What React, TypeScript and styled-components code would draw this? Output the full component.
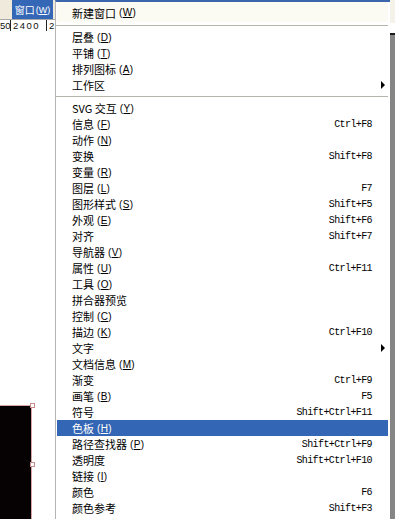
import React from 'react';
import styled, { createGlobalStyle } from 'styled-components';

const GlobalStyle = createGlobalStyle`
  html, body {
    margin: 0;
    padding: 0;
    background: #fff;
  }
  body {
    width: 395px;
    height: 519px;
    overflow: hidden;
    font-family: "Noto Sans CJK SC", "Liberation Sans", sans-serif;
  }
`;

const Screen = styled.div`
  display: flex;
  width: 395px;
  height: 519px;
  overflow: hidden;
  background: #fff;
`;

// left side: what is visible of the application behind the menu
const Workspace = styled.div`
  width: 55px;
  flex: none;
  display: flex;
  flex-direction: column;
`;

const MenuBar = styled.div`
  height: 19px;
  display: flex;
  background: #efeadb;
  border-bottom: 1px solid #a8a8a8;
`;

const MenuBarItem = styled.div`
  margin-left: 12px;
  width: 41px;
  background: #3567b7;
  color: #fff;
  font-size: 10px;
  display: flex;
  align-items: center;
  justify-content: center;
  white-space: nowrap;
  overflow: hidden;
`;

const BarMnemonic = styled.span`
  margin-left: 1px;
  font-family: "Liberation Sans", sans-serif;
  font-size: 9px;
`;

const Ruler = styled.div`
  height: 11px;
  display: flex;
  font-family: "Liberation Sans", sans-serif;
  font-size: 9.5px;
  line-height: 11px;
  color: #111;
  overflow: hidden;
  white-space: nowrap;
`;

const RulerCell = styled.div<{ $w: number; $tick?: boolean; $spread?: number }>`
  width: ${p => p.$w}px;
  flex: none;
  overflow: hidden;
  padding-left: ${p => (p.$tick ? 2 : 0)}px;
  letter-spacing: ${p => p.$spread ?? 0}px;
  box-sizing: border-box;
  border-left: ${p => (p.$tick ? '1px solid #222' : 'none')};
`;

const Canvas = styled.div`
  flex: 1;
  display: flex;
  flex-direction: column;
  justify-content: flex-end;
`;

const Shape = styled.div`
  position: relative;
  width: 31px;
  height: 113px;
  background: #060102;
  border-top: 1px solid #d9a4a4;
  border-right: 1px solid #d9a4a4;
`;

const Handle = styled.div<{ $top: number }>`
  position: absolute;
  right: -4px;
  top: ${p => p.$top}px;
  width: 5px;
  height: 5px;
  background: #fff;
  border: 1px solid #c88a8a;
  box-sizing: border-box;
`;

// the dropdown menu
const Menu = styled.div`
  flex: 1;
  display: flex;
  flex-direction: column;
  background: #fff;
  border-left: 1px solid #b4b4b4;
  border-top: 2px solid #3b66ab;
`;

const Item = styled.div<{ $active?: boolean; $tinted?: boolean; $tall?: boolean }>`
  height: ${p => (p.$tall ? 20 : 16)}px;
  flex: none;
  display: flex;
  align-items: center;
  margin: 0 2px 0 1px;
  padding-left: 15px;
  padding-top: ${p => (p.$tall ? 1 : 0)}px;
  box-sizing: border-box;
  background: ${p => (p.$active ? '#3366b4' : p.$tinted ? '#fbfaf3' : 'transparent')};
  color: ${p => (p.$active ? '#fff' : '#000')};
  font-size: 11px;
`;

const Label = styled.div`
  flex: 1;
  white-space: nowrap;
  display: flex;
  align-items: center;
`;

const Mnemonic = styled.span`
  margin-left: 3px;
  font-family: "Liberation Sans", sans-serif;
  font-size: 10px;
  letter-spacing: 0.3px;

  u {
    text-decoration-thickness: 1px;
    text-underline-offset: 1px;
  }
`;

const Shortcut = styled.div`
  font-family: "Liberation Mono", monospace;
  font-size: 10px;
  letter-spacing: -0.6px;
  white-space: nowrap;
`;

const ArrowCell = styled.div`
  width: 16px;
  flex: none;
  display: flex;
  align-items: center;
`;

const Arrow = styled.div`
  margin-left: 9px;
  width: 0;
  height: 0;
  border-left: 4px solid #000;
  border-top: 4px solid transparent;
  border-bottom: 4px solid transparent;
`;

const Separator = styled.div`
  height: 7px;
  flex: none;
  display: flex;
  flex-direction: column;
  justify-content: center;
  margin: 0 2px 0 0;

  &::before {
    content: '';
    display: block;
    height: 1px;
    background: #b6b3aa;
    border-bottom: 1px solid #fff;
  }
`;

const EdgeStrip = styled.div`
  width: 5px;
  flex: none;
  background: linear-gradient(
    to bottom,
    #f4f2e9 0 23px,
    #ffffff 23px 33px,
    #1a1a1a 33px 35px,
    #858585 35px
  );
`;

type Entry = { label: string; key?: string; shortcut?: string; sub?: boolean; active?: boolean } | 'sep';

const entries: Entry[] = [
  'sep',
  { label: '层叠', key: 'D' },
  { label: '平铺', key: 'T' },
  { label: '排列图标', key: 'A' },
  { label: '工作区', sub: true },
  'sep',
  { label: 'SVG 交互', key: 'Y' },
  { label: '信息', key: 'F', shortcut: 'Ctrl+F8' },
  { label: '动作', key: 'N' },
  { label: '变换', shortcut: 'Shift+F8' },
  { label: '变量', key: 'R' },
  { label: '图层', key: 'L', shortcut: 'F7' },
  { label: '图形样式', key: 'S', shortcut: 'Shift+F5' },
  { label: '外观', key: 'E', shortcut: 'Shift+F6' },
  { label: '对齐', shortcut: 'Shift+F7' },
  { label: '导航器', key: 'V' },
  { label: '属性', key: 'U', shortcut: 'Ctrl+F11' },
  { label: '工具', key: 'O' },
  { label: '拼合器预览' },
  { label: '控制', key: 'C' },
  { label: '描边', key: 'K', shortcut: 'Ctrl+F10' },
  { label: '文字', sub: true },
  { label: '文档信息', key: 'M' },
  { label: '渐变', shortcut: 'Ctrl+F9' },
  { label: '画笔', key: 'B', shortcut: 'F5' },
  { label: '符号', shortcut: 'Shift+Ctrl+F11' },
  { label: '色板', key: 'H', active: true },
  { label: '路径查找器', key: 'P', shortcut: 'Shift+Ctrl+F9' },
  { label: '透明度', shortcut: 'Shift+Ctrl+F10' },
  { label: '链接', key: 'I' },
  { label: '颜色', shortcut: 'F6' },
  { label: '颜色参考', shortcut: 'Shift+F3' },
];

const MenuLabel = ({ label, k }: { label: string; k?: string }) => (
  <Label>
    {label}
    {k && (
      <Mnemonic>
        (<u>{k}</u>)
      </Mnemonic>
    )}
  </Label>
);

const App = () => {
  return (
    <>
      <GlobalStyle />
      <Screen>
        <Workspace>
          <MenuBar>
            <MenuBarItem>
              窗口<BarMnemonic>(<u>W</u>)</BarMnemonic>
            </MenuBarItem>
          </MenuBar>
          <Ruler>
            <RulerCell $w={10}>50</RulerCell>
            <RulerCell $w={36} $tick $spread={1.5}>2400</RulerCell>
            <RulerCell $w={9} $tick>2</RulerCell>
          </Ruler>
          <Canvas>
            <Shape>
              <Handle $top={-3} />
              <Handle $top={56} />
            </Shape>
          </Canvas>
        </Workspace>

        <Menu>
          <Item $tall $tinted>
            <MenuLabel label="新建窗口" k="W" />
            <ArrowCell />
          </Item>
          {entries.map((e, i) =>
            e === 'sep' ? (
              <Separator key={i} />
            ) : (
              <Item key={i} $active={e.active}>
                <MenuLabel label={e.label} k={e.key} />
                {e.shortcut && <Shortcut>{e.shortcut}</Shortcut>}
                <ArrowCell>{e.sub && <Arrow />}</ArrowCell>
              </Item>
            )
          )}
        </Menu>
        <EdgeStrip />
      </Screen>
    </>
  );
};

export default App;
